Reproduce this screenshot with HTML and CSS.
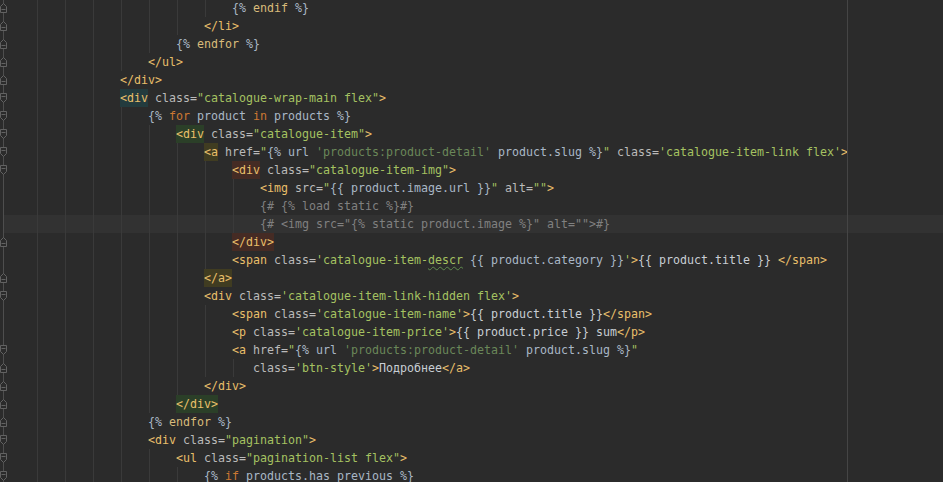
FILE: index.html
```html
<!DOCTYPE html>
<html lang="ru">
<head>
  <meta charset="UTF-8">
  <title>catalogue.html</title>
  <link rel="stylesheet" href="styles.css">
</head>
<body>
  <svg class="defs" width="0" height="0">
    <symbol id="fold-open" viewBox="0 0 8 18">
      <path d="M0.5 4.5H6.5V10.5L3.5 13.5L0.5 10.5Z"/>
      <path d="M1.5 7.5H5.5"/>
    </symbol>
    <symbol id="fold-close" viewBox="0 0 8 18">
      <path d="M0.5 13.5H6.5V7.5L3.5 4.5L0.5 7.5Z"/>
      <path d="M1.5 10.5H5.5"/>
    </symbol>
  </svg>

  <div class="editor">
    <div class="code">
      <div class="ln"><span class="fold"><svg class="fm"><use href="#fold-close"/></svg></span><span class="ind c28"></span><span class="d">{% </span><span class="e">endif</span><span class="d"> %}</span></div>
      <div class="ln"><span class="fold"><svg class="fm"><use href="#fold-close"/></svg></span><span class="ind c24"></span><span class="t">&lt;/li&gt;</span></div>
      <div class="ln"><span class="fold"><svg class="fm"><use href="#fold-close"/></svg></span><span class="ind c20"></span><span class="d">{% </span><span class="e">endfor</span><span class="d"> %}</span></div>
      <div class="ln"><span class="fold"><svg class="fm"><use href="#fold-close"/></svg></span><span class="ind c16"></span><span class="t">&lt;/ul&gt;</span></div>
      <div class="ln"><span class="fold"><svg class="fm"><use href="#fold-close"/></svg></span><span class="ind c12"></span><span class="t">&lt;/div&gt;</span></div>
      <div class="ln"><span class="fold"><svg class="fm"><use href="#fold-open"/></svg></span><span class="ind c12"></span><span class="hl teal t">&lt;div</span><span class="a"> class=</span><span class="v">"catalogue-wrap-main flex"</span><span class="t">&gt;</span></div>
      <div class="ln"><span class="fold"><svg class="fm"><use href="#fold-open"/></svg></span><span class="ind c16"></span><span class="d">{% </span><span class="k">for</span><span class="d"> product </span><span class="k">in</span><span class="d"> products %}</span></div>
      <div class="ln"><span class="fold"><svg class="fm"><use href="#fold-open"/></svg></span><span class="ind c20"></span><span class="hl green t">&lt;div</span><span class="a"> class=</span><span class="v">"catalogue-item"</span><span class="t">&gt;</span></div>
      <div class="ln"><span class="fold"><svg class="fm"><use href="#fold-open"/></svg></span><span class="ind c24"></span><span class="hl olive t">&lt;a</span><span class="a"> href=</span><span class="v">"</span><span class="d">{% url </span><span class="s">'products:product-detail'</span><span class="d"> product.slug %}</span><span class="v">"</span><span class="a"> class=</span><span class="v">'catalogue-item-link flex'</span><span class="t">&gt;</span></div>
      <div class="ln"><span class="fold"><svg class="fm"><use href="#fold-open"/></svg></span><span class="ind c28"></span><span class="hl red t">&lt;div</span><span class="a"> class=</span><span class="v">"catalogue-item-img"</span><span class="t">&gt;</span></div>
      <div class="ln"><span class="fold"></span><span class="ind c32"></span><span class="t">&lt;img</span><span class="a"> src=</span><span class="v">"</span><span class="d">{{ product.image.url }}</span><span class="v">"</span><span class="a"> alt=</span><span class="v">""</span><span class="t">&gt;</span></div>
      <div class="ln"><span class="fold"></span><span class="ind c32"></span><span class="c">{# {% load static %}#}</span></div>
      <div class="ln cur"><span class="fold"></span><span class="ind c32"></span><span class="c">{# &lt;img src="{% static product.image %}" alt=""&gt;#}</span></div>
      <div class="ln"><span class="fold"><svg class="fm"><use href="#fold-close"/></svg></span><span class="ind c28"></span><span class="hl red t">&lt;/div&gt;</span></div>
      <div class="ln"><span class="fold"></span><span class="ind c28"></span><span class="t">&lt;span</span><span class="a"> class=</span><span class="v">'catalogue-item-<span class="typo">descr</span> </span><span class="d">{{ product.category }}</span><span class="v">'</span><span class="t">&gt;</span><span class="x">{{ product.title }} </span><span class="t">&lt;/span&gt;</span></div>
      <div class="ln"><span class="fold"><svg class="fm"><use href="#fold-close"/></svg></span><span class="ind c24"></span><span class="hl olive t">&lt;/a&gt;</span></div>
      <div class="ln"><span class="fold"><svg class="fm"><use href="#fold-open"/></svg></span><span class="ind c24"></span><span class="t">&lt;div</span><span class="a"> class=</span><span class="v">'catalogue-item-link-hidden flex'</span><span class="t">&gt;</span></div>
      <div class="ln"><span class="fold"></span><span class="ind c28"></span><span class="t">&lt;span</span><span class="a"> class=</span><span class="v">'catalogue-item-name'</span><span class="t">&gt;</span><span class="x">{{ product.title }}</span><span class="t">&lt;/span&gt;</span></div>
      <div class="ln"><span class="fold"></span><span class="ind c28"></span><span class="t">&lt;p</span><span class="a"> class=</span><span class="v">'catalogue-item-price'</span><span class="t">&gt;</span><span class="x">{{ product.price }} sum</span><span class="t">&lt;/p&gt;</span></div>
      <div class="ln"><span class="fold"><svg class="fm"><use href="#fold-open"/></svg></span><span class="ind c28"></span><span class="t">&lt;a</span><span class="a"> href=</span><span class="v">"</span><span class="d">{% url </span><span class="s">'products:product-detail'</span><span class="d"> product.slug %}</span><span class="v">"</span></div>
      <div class="ln"><span class="fold"><svg class="fm"><use href="#fold-close"/></svg></span><span class="ind c31"></span><span class="a">class=</span><span class="v">'btn-style'</span><span class="t">&gt;</span><span class="x">Подробнее</span><span class="t">&lt;/a&gt;</span></div>
      <div class="ln"><span class="fold"><svg class="fm"><use href="#fold-close"/></svg></span><span class="ind c24"></span><span class="t">&lt;/div&gt;</span></div>
      <div class="ln"><span class="fold"><svg class="fm"><use href="#fold-close"/></svg></span><span class="ind c20"></span><span class="hl green t">&lt;/div&gt;</span></div>
      <div class="ln"><span class="fold"><svg class="fm"><use href="#fold-close"/></svg></span><span class="ind c16"></span><span class="d">{% </span><span class="e">endfor</span><span class="d"> %}</span></div>
      <div class="ln"><span class="fold"><svg class="fm"><use href="#fold-open"/></svg></span><span class="ind c16"></span><span class="t">&lt;div</span><span class="a"> class=</span><span class="v">"pagination"</span><span class="t">&gt;</span></div>
      <div class="ln"><span class="fold"><svg class="fm"><use href="#fold-open"/></svg></span><span class="ind c20"></span><span class="t">&lt;ul</span><span class="a"> class=</span><span class="v">"pagination-list flex"</span><span class="t">&gt;</span></div>
      <div class="ln"><span class="fold"><svg class="fm"><use href="#fold-open"/></svg></span><span class="ind c24"></span><span class="d">{% </span><span class="k">if</span><span class="d"> products.has_previous %}</span></div>
    </div>
  </div>
</body>
</html>
```

FILE: styles.css
```css
/* Editor, Darcula-like */
body {
  margin: 0;
  background-color: #2b2b2b;
  color: #a9b7c6;
  font-family: "DejaVu Sans Mono", "Liberation Mono", monospace;
  font-size: 11.63px;
  overflow: hidden;
}
.defs {
  position: absolute;
}
.editor {
  position: relative;
  height: 482px;
  overflow: hidden;
}
/* right margin guide */
.editor::after {
  content: '';
  position: absolute;
  left: 847px;
  top: 0;
  bottom: 0;
  width: 1px;
  background-color: #454545;
}
.code {
  margin-top: -1px;
}
.ln {
  height: 18px;
  line-height: 18px;
  white-space: pre;
}
.ln.cur {
  background: linear-gradient(to right, transparent 4px, #323232 4px);
}

/* Gutter with fold markers */
.fold {
  display: inline-block;
  width: 36px;
  height: 18px;
  vertical-align: top;
  background: linear-gradient(to right, transparent 3px, #4e4e4e 3px, #4e4e4e 4px, transparent 4px);
}
.fm {
  display: block;
  width: 8px;
  height: 18px;
  fill: #2b2b2b;
  stroke: #626262;
  stroke-width: 1;
}

/* Indent guides */
.ind {
  display: inline-block;
  height: 18px;
  vertical-align: top;
  background: repeating-linear-gradient(to right, transparent 0, transparent 1px, #3a3a3a 1px, #3a3a3a 2px, transparent 2px, transparent 28px);
}
.c12 { width: 84px; }
.c16 { width: 112px; }
.c20 { width: 140px; }
.c24 { width: 168px; }
.c28 { width: 196px; }
.c31 { width: 217px; }
.c32 { width: 224px; }

/* Syntax colours */
.t { color: #e8bf6a; }
.a { color: #bababa; }
.v { color: #a5c261; }
.d { color: #a9b7c6; }
.e { color: #d9bb7a; }
.k { color: #cc7832; }
.s { color: #6a8759; }
.c { color: #808080; }
.x { color: #c8ced4; }
.typo {
  text-decoration: underline wavy #5f8a4e;
  text-decoration-thickness: 1px;
  text-underline-offset: 2px;
}

/* Matched tag highlight */
.hl {
  display: inline-block;
  height: 18px;
  vertical-align: top;
}
.teal { background-color: #233b3e; }
.green { background-color: #2b3f28; }
.olive { background-color: #403c21; }
.red { background-color: #452b24; }
```
